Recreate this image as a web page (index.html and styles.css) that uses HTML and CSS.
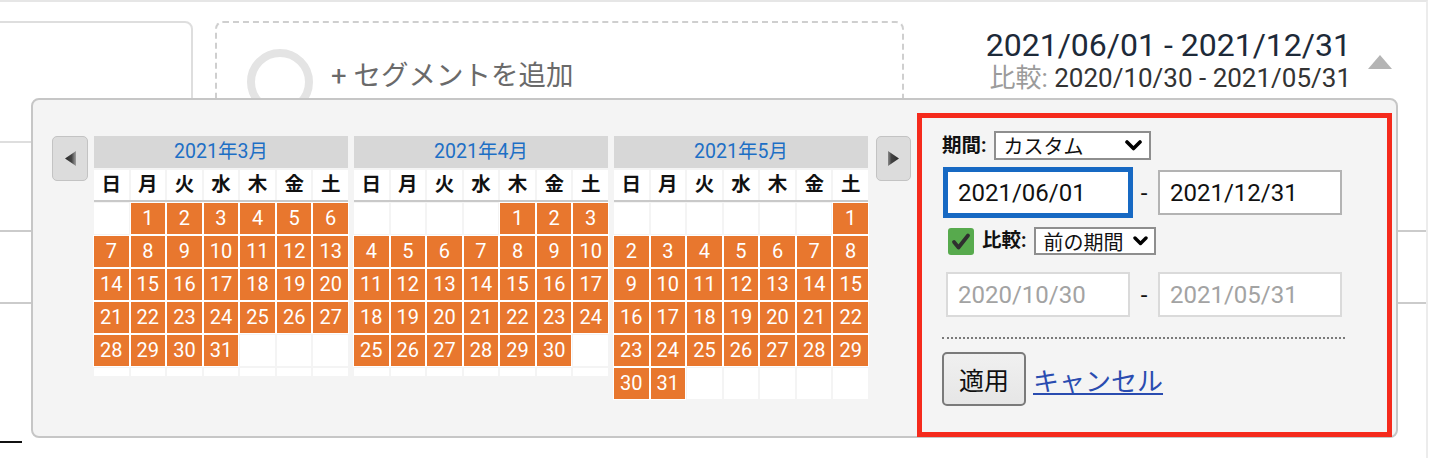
FILE: index.html
```html
<!DOCTYPE html>
<html lang="ja">
<head>
<meta charset="utf-8">
<title>期間</title>
<link rel="stylesheet" href="styles.css">
</head>
<body>
<div class="page">
  <div class="topbar">
    <div class="card-left"></div>
    <div class="segment">
      <span class="seg-circle"></span>
      <span class="seg-label">+ セグメントを追加</span>
    </div>
    <div class="daterange">
      <div class="dr-main">2021/06/01 - 2021/12/31</div>
      <div class="dr-sub"><span class="dr-sub-label">比較:</span> 2020/10/30 - 2021/05/31</div>
    </div>
    <span class="dr-toggle"></span>
  </div>
  <div class="rows">
    <div class="row r1"></div>
    <div class="row r2"></div>
  </div>
  <div class="tab"></div>

  <div class="popup">
    <div class="cal-area">
      <div class="nav prev">
        <svg width="11" height="15" viewBox="0 0 11 15"><defs><linearGradient id="gp" x1="0" x2="1" y1="0" y2="0"><stop offset="0" stop-color="#2c2c2c"/><stop offset="0.6" stop-color="#444"/><stop offset="1" stop-color="#a0a0a0"/></linearGradient></defs><polygon points="11,0 0,7.5 11,15" fill="url(#gp)"/></svg>
      </div>
      <div class="months">
        <div class="month">
          <div class="m-title">2021年3月</div>
          <div class="dow"><span>日</span><span>月</span><span>火</span><span>水</span><span>木</span><span>金</span><span>土</span></div>
          <div class="days r5">
            <span></span><span class="on">1</span><span class="on">2</span><span class="on">3</span><span class="on">4</span><span class="on">5</span><span class="on">6</span>
            <span class="on">7</span><span class="on">8</span><span class="on">9</span><span class="on">10</span><span class="on">11</span><span class="on">12</span><span class="on">13</span>
            <span class="on">14</span><span class="on">15</span><span class="on">16</span><span class="on">17</span><span class="on">18</span><span class="on">19</span><span class="on">20</span>
            <span class="on">21</span><span class="on">22</span><span class="on">23</span><span class="on">24</span><span class="on">25</span><span class="on">26</span><span class="on">27</span>
            <span class="on">28</span><span class="on">29</span><span class="on">30</span><span class="on">31</span><span></span><span></span><span></span>
            <span></span><span></span><span></span><span></span><span></span><span></span><span></span>
          </div>
        </div>
        <div class="month">
          <div class="m-title">2021年4月</div>
          <div class="dow"><span>日</span><span>月</span><span>火</span><span>水</span><span>木</span><span>金</span><span>土</span></div>
          <div class="days r5">
            <span></span><span></span><span></span><span></span><span class="on">1</span><span class="on">2</span><span class="on">3</span>
            <span class="on">4</span><span class="on">5</span><span class="on">6</span><span class="on">7</span><span class="on">8</span><span class="on">9</span><span class="on">10</span>
            <span class="on">11</span><span class="on">12</span><span class="on">13</span><span class="on">14</span><span class="on">15</span><span class="on">16</span><span class="on">17</span>
            <span class="on">18</span><span class="on">19</span><span class="on">20</span><span class="on">21</span><span class="on">22</span><span class="on">23</span><span class="on">24</span>
            <span class="on">25</span><span class="on">26</span><span class="on">27</span><span class="on">28</span><span class="on">29</span><span class="on">30</span><span></span>
            <span></span><span></span><span></span><span></span><span></span><span></span><span></span>
          </div>
        </div>
        <div class="month">
          <div class="m-title">2021年5月</div>
          <div class="dow"><span>日</span><span>月</span><span>火</span><span>水</span><span>木</span><span>金</span><span>土</span></div>
          <div class="days r6">
            <span></span><span></span><span></span><span></span><span></span><span></span><span class="on">1</span>
            <span class="on">2</span><span class="on">3</span><span class="on">4</span><span class="on">5</span><span class="on">6</span><span class="on">7</span><span class="on">8</span>
            <span class="on">9</span><span class="on">10</span><span class="on">11</span><span class="on">12</span><span class="on">13</span><span class="on">14</span><span class="on">15</span>
            <span class="on">16</span><span class="on">17</span><span class="on">18</span><span class="on">19</span><span class="on">20</span><span class="on">21</span><span class="on">22</span>
            <span class="on">23</span><span class="on">24</span><span class="on">25</span><span class="on">26</span><span class="on">27</span><span class="on">28</span><span class="on">29</span>
            <span class="on">30</span><span class="on">31</span><span></span><span></span><span></span><span></span><span></span>
          </div>
        </div>
      </div>
      <div class="nav next">
        <svg width="11" height="15" viewBox="0 0 11 15"><defs><linearGradient id="gn" x1="0" x2="1" y1="0" y2="0"><stop offset="0" stop-color="#8a8a8a"/><stop offset="0.3" stop-color="#444"/><stop offset="1" stop-color="#2c2c2c"/></linearGradient></defs><polygon points="0,0 11,7.5 0,15" fill="url(#gn)"/></svg>
      </div>
    </div>

    <div class="range-panel">
      <div class="rp-row period">
        <span class="lbl">期間:</span>
        <div class="select s1"><span>カスタム</span>
          <svg width="17" height="11" viewBox="0 0 17 11"><polyline points="2,2 8.5,8.5 15,2" fill="none" stroke="#000" stroke-width="3.6" stroke-linecap="round" stroke-linejoin="round"/></svg>
        </div>
      </div>
      <div class="rp-row dates">
        <input class="inp focus" type="text" value="2021/06/01">
        <span class="dash">-</span>
        <input class="inp" type="text" value="2021/12/31">
      </div>
      <div class="rp-row compare">
        <span class="check">
          <svg width="26" height="27" viewBox="0 0 26 27"><rect x="0" y="0" width="26" height="27" rx="3" fill="#57aa4d"/><polyline points="6,14 10.5,19.5 20,7.5" fill="none" stroke="#2f2f2f" stroke-width="3.8" stroke-linecap="round" stroke-linejoin="round"/></svg>
        </span>
        <span class="lbl cmp-lbl">比較:</span>
        <div class="select s2"><span>前の期間</span>
          <svg width="15" height="10" viewBox="0 0 15 10"><polyline points="2,2 7.5,7.5 13,2" fill="none" stroke="#000" stroke-width="3.4" stroke-linecap="round" stroke-linejoin="round"/></svg>
        </div>
      </div>
      <div class="rp-row compare-dates">
        <input class="inp muted" type="text" value="2020/10/30">
        <span class="dash">-</span>
        <input class="inp muted" type="text" value="2021/05/31">
      </div>
      <div class="divider"></div>
      <div class="rp-row actions">
        <button class="btn" type="button">適用</button>
        <a class="link" href="#">キャンセル</a>
      </div>
    </div>
  </div>
</div>
</body>
</html>
```
FILE: styles.css
```css
* { box-sizing: border-box; }
html, body { margin: 0; padding: 0; background: #fff; }
body { font-family: Roboto, "Noto Sans CJK JP", sans-serif; color: #222; }

.page {
  position: relative;
  width: 1428px;
  height: 458px;
  overflow: hidden;
  border-top: 2px solid #e6e6e6;
  border-right: 2px solid #ececec;
}

/* ---------- background header ---------- */
.topbar {
  display: flex;
  align-items: flex-start;
  padding-top: 19px;
  height: 159px;
}
.card-left {
  flex: none;
  width: 203px;
  height: 122px;
  margin-left: -10px;
  border: 2px solid #dedede;
  border-radius: 8px;
}
.segment {
  flex: none;
  width: 689px;
  height: 140px;
  margin-left: 22px;
  border: 2px dashed #cfcfcf;
  border-radius: 8px;
  display: flex;
  align-items: flex-start;
  padding: 26px 0 0 30px;
}
.seg-circle {
  flex: none;
  width: 66px;
  height: 66px;
  border: 8px solid #e4e4e4;
  border-radius: 50%;
}
.seg-label {
  margin: 10px 0 0 18px;
  font-size: 27.5px;
  line-height: 34px;
  color: #6a6a6a;
}
.daterange {
  margin-left: auto;
  margin-top: 5px;
  text-align: right;
  white-space: nowrap;
}
.dr-main { font-size: 32px; line-height: 38px; color: #1d2a39; }
.dr-sub { font-size: 26px; line-height: 28px; color: #333; }
.dr-sub-label { color: #9b9b9b; }
.dr-toggle {
  flex: none;
  width: 0;
  height: 0;
  margin: 34px 34px 0 17px;
  border-left: 12.5px solid transparent;
  border-right: 12.5px solid transparent;
  border-bottom: 14px solid #b4b4b4;
}

.row { border-bottom: 2px solid #cbcbcb; }
.row.r1 { height: 71px; }
.row.r2 { height: 72px; }
.tab { width: 22px; height: 2px; margin-top: 137px; background: #111; }

/* ---------- popup ---------- */
.popup {
  position: absolute;
  top: 96px;
  left: 31px;
  width: 1367px;
  height: 340px;
  z-index: 5;
  display: flex;
  align-items: flex-start;
  padding: 0 0 0 19px;
  background: #f4f4f4;
  border: 2px solid #c6c6c6;
  border-radius: 8px;
}
.cal-area { display: flex; align-items: flex-start; margin-top: 36px; }
.nav {
  flex: none;
  width: 36px;
  height: 45px;
  border: 1px solid #c3c3c3;
  border-radius: 5px;
  background: #dcdcdc;
  display: flex;
  align-items: center;
  justify-content: center;
}
.nav.prev { margin-right: 6px; }
.nav.next { margin-left: 8px; width: 35px; }
.months { display: flex; gap: 6px; }
.month { width: 254px; }
.m-title {
  height: 32px;
  line-height: 32px;
  margin-bottom: 2px;
  background: #d7d7d7;
  text-align: center;
  color: #1d6fc5;
  font-size: 19.5px;
}
.dow {
  display: grid;
  grid-template-columns: repeat(7, 1fr);
  column-gap: 2px;
  border-bottom: 2px solid #c9c9c9;
}
.dow span {
  height: 30px;
  line-height: 30px;
  background: #fff;
  text-align: center;
  font-weight: 700;
  font-size: 19.5px;
  color: #111;
}
.days {
  display: grid;
  grid-template-columns: repeat(7, 1fr);
  gap: 2px;
  margin-top: 1px;
}
.days.r5 { grid-template-rows: repeat(5, 31px) 8px; }
.days.r6 { grid-template-rows: repeat(6, 31px); }
.days span {
  background: #fff;
  text-align: center;
  line-height: 31px;
  font-size: 20px;
  color: #fff;
}
.days span.on { background: #e8772e; box-shadow: 0 0 0 1px #fff; }

/* ---------- range panel ---------- */
.range-panel {
  flex: none;
  width: 475px;
  height: 324px;
  margin: 13px 0 0 6px;
  border: 5px solid #f52a1c;
  padding: 13px 0 0 20px;
}
.rp-row { display: flex; align-items: center; }
.lbl { font-size: 19.5px; font-weight: 700; color: #111; line-height: 1; }
.select {
  display: flex;
  align-items: center;
  justify-content: space-between;
  background: #fff;
  border: 2px solid #8e8e8e;
  font-size: 20px;
  color: #111;
}
.select.s1 { width: 157px; height: 29px; margin-left: 7px; padding: 0 7px 0 8px; }
.select.s2 { width: 122px; height: 28px; margin-left: 7px; padding: 0 6px 0 8px; }

.dates { margin-top: 10px; }
.inp {
  width: 184px;
  height: 45px;
  margin: 0;
  padding: 0 0 0 10px;
  border: 2px solid #b3b3b3;
  background: #fff;
  font-family: Roboto, "Noto Sans CJK JP", sans-serif;
  font-size: 24px;
  color: #111;
  border-radius: 0;
}
.inp.focus { margin-left: 4px; border-color: #1769c3; outline: 3px solid #1769c3; }
.inp.muted { border-color: #dadada; color: #a3a3a3; }
.compare-dates .inp:first-child { margin-left: 4px; }
.dash { width: 28px; text-align: center; font-size: 24px; color: #111; }

.compare { margin-top: 12px; height: 28px; }
.check { display: flex; margin-left: 6px; }
.cmp-lbl { margin-left: 8px; }
.compare-dates { margin-top: 17px; }

.divider { margin-top: 20px; width: 403px; border-top: 2px dotted #7a7a7a; }

.actions { margin-top: 13px; }
.btn {
  width: 84px;
  height: 54px;
  padding: 0;
  border: 2px solid #7a7a7a;
  border-radius: 5px;
  background: linear-gradient(#f0f0f0, #e6e6e6);
  font-family: Roboto, "Noto Sans CJK JP", sans-serif;
  font-size: 25px;
  color: #111;
}
.link {
  margin-left: 7px;
  font-size: 26px;
  color: #2a4cb0;
  text-decoration: underline;
}
```
